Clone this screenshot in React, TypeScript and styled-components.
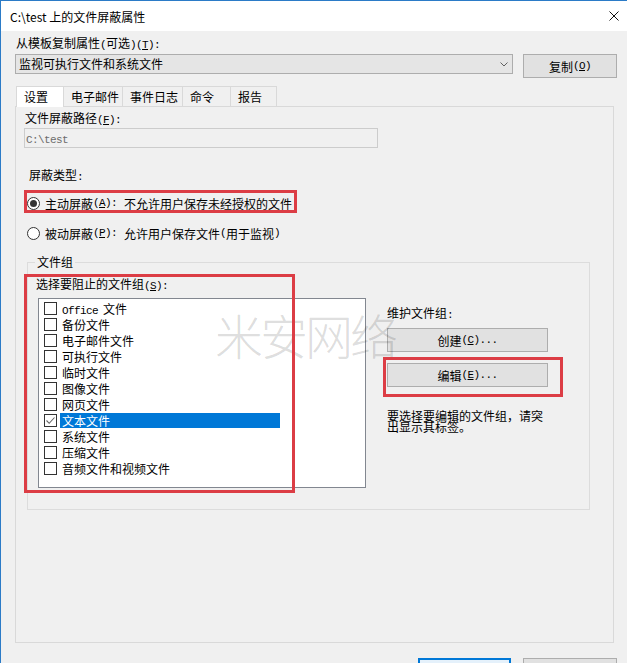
import React from "react";
import styled, { createGlobalStyle } from "styled-components";

const GlobalStyle = createGlobalStyle`
  html, body { margin: 0; padding: 0; background: #f0f0f0; overflow: hidden; }
  body { font-family: "Noto Sans CJK SC", "Noto Sans", sans-serif; font-size: 12px; color: #000; }
  * { box-sizing: border-box; }
`;

const Window = styled.div`
  position: relative;
  width: 627px;
  height: 663px;
  overflow: hidden;
  background: #f0f0f0;
  border-left: 1px solid #2b7bc7;
  border-top: 1px solid #2b7bc7;
  display: flex;
  flex-direction: column;
`;

const TitleBar = styled.div`
  height: 30px;
  flex: none;
  background: #fff;
  display: flex;
  align-items: center;
  justify-content: space-between;
  padding: 0 8px 0 9px;
  font-size: 12px;
`;

const CloseIcon = () => (
  <svg width="10" height="10" viewBox="0 0 10 10">
    <path d="M0.5 0.5 L9.5 9.5 M9.5 0.5 L0.5 9.5" stroke="#111" strokeWidth="1" fill="none" />
  </svg>
);

const Body = styled.div`
  flex: 1;
  padding: 4px 10px 0 14px;
  display: flex;
  flex-direction: column;
`;

const Label = styled.div<{ $mt?: number; $ml?: number }>`
  line-height: 16px;
  height: 16px;
  white-space: nowrap;
  margin-top: ${(p) => p.$mt ?? 0}px;
  margin-left: ${(p) => p.$ml ?? 0}px;
`;

const Asc = styled.span<{ $gap?: number }>`
  font-family: "Liberation Mono", monospace;
  font-size: 11px;
  letter-spacing: -0.6px;
  margin-right: ${(p) => p.$gap ?? 0}px;
`;

const TemplateRow = styled.div`
  display: flex;
  align-items: flex-start;
  margin-top: 3px;
`;

const Combo = styled.div`
  width: 498px;
  height: 20px;
  background: #e5e5e5;
  border: 1px solid #adadad;
  display: flex;
  align-items: center;
  justify-content: space-between;
  padding: 0 4px 0 3px;
  line-height: 18px;
`;

const Chevron = () => (
  <svg width="8" height="5" viewBox="0 0 8 5">
    <path d="M0.5 0.5 L4 4 L7.5 0.5" stroke="#606060" strokeWidth="1" fill="none" />
  </svg>
);

const Button = styled.div<{ $w: number; $ml?: number; $mt?: number; $default?: boolean }>`
  width: ${(p) => p.$w}px;
  height: 24px;
  flex: none;
  margin-left: ${(p) => p.$ml ?? 0}px;
  margin-top: ${(p) => p.$mt ?? 0}px;
  background: ${(p) => (p.$default ? "#e5f1fb" : "#e1e1e1")};
  border: 1px solid ${(p) => (p.$default ? "#0078d7" : "#adadad")};
  box-shadow: ${(p) => (p.$default ? "inset 0 0 0 1px #0078d7" : "none")};
  display: flex;
  align-items: center;
  justify-content: center;
  white-space: nowrap;
`;

const TabStrip = styled.div`
  display: flex;
  align-items: flex-end;
  height: 20px;
  margin-top: 8px;
  margin-left: 1px;
  position: relative;
  z-index: 1;
`;

const Tab = styled.div<{ $w: number; $active?: boolean }>`
  width: ${(p) => p.$w}px;
  height: ${(p) => (p.$active ? 21 : 20)}px;
  margin-bottom: ${(p) => (p.$active ? -1 : 0)}px;
  padding: 1px 0 0 7px;
  line-height: 17px;
  background: ${(p) => (p.$active ? "#ffffff" : "#f0f0f0")};
  border: 1px solid #d9d9d9;
  border-bottom: none;
  margin-right: -1px;
  white-space: nowrap;
`;

const Panel = styled.div`
  width: 599px;
  height: 537px;
  flex: none;
  border: 1px solid #d9d9d9;
  padding: 3px 0 0 8px;
  display: flex;
  flex-direction: column;
`;

const PathInput = styled.div`
  width: 354px;
  height: 20px;
  margin-top: 2px;
  border: 1px solid #cccccc;
  background: #f0f0f0;
  color: #6d6d6d;
  padding-left: 1px;
  line-height: 18px;
`;

const RadioRow = styled.div<{ $mt: number }>`
  display: flex;
  align-items: center;
  height: 16px;
  margin-top: ${(p) => p.$mt}px;
  padding-left: 3px;
  white-space: nowrap;
`;

const RadioCircle = styled.span<{ $checked?: boolean }>`
  width: 13px;
  height: 13px;
  flex: none;
  margin-right: 5px;
  border: 1px solid #333;
  border-radius: 50%;
  background: #fff;
  display: flex;
  align-items: center;
  justify-content: center;
  &::after {
    content: "";
    width: 7px;
    height: 7px;
    border-radius: 50%;
    background: ${(p) => (p.$checked ? "#333" : "transparent")};
  }
`;

const GroupBox = styled.div`
  width: 563px;
  height: 248px;
  margin: 21px 0 0 3px;
  border: 1px solid #dcdcdc;
  display: flex;
  flex-direction: column;
`;

const GroupTitle = styled.div`
  align-self: flex-start;
  margin: -9px 0 0 7px;
  padding: 0 2px;
  background: #f0f0f0;
  line-height: 16px;
  height: 16px;
`;

const GroupContent = styled.div`
  display: flex;
  margin-top: 6px;
  padding-left: 8px;
`;

const Column = styled.div<{ $ml?: number }>`
  display: flex;
  flex-direction: column;
  margin-left: ${(p) => p.$ml ?? 0}px;
`;

const ListBox = styled.div`
  width: 328px;
  height: 190px;
  margin: 6px 0 0 2px;
  background: #fff;
  border: 1px solid #828790;
  padding: 1px 0 0 5px;
`;

const ListRow = styled.div`
  display: flex;
  align-items: center;
  height: 16px;
`;

const CheckBox = styled.span`
  width: 13px;
  height: 13px;
  flex: none;
  border: 1px solid #333;
  background: #fff;
  display: flex;
  align-items: center;
  justify-content: center;
`;

const ItemText = styled.span<{ $selected?: boolean }>`
  margin-left: 3px;
  padding-left: 2px;
  width: 220px;
  height: 15px;
  line-height: 15px;
  white-space: nowrap;
  background: ${(p) => (p.$selected ? "#0078d7" : "transparent")};
  color: ${(p) => (p.$selected ? "#fff" : "#000")};
`;

const Hint = styled.div`
  width: 161px;
  margin-top: 23px;
  line-height: 11px;
`;

const BottomBar = styled.div`
  display: flex;
  justify-content: flex-end;
  gap: 12px;
  margin-top: 15px;
`;

const Watermark = styled.div`
  position: absolute;
  left: 214px;
  top: 309px;
  font-size: 48px;
  line-height: 48px;
  letter-spacing: -3px;
  color: rgba(0, 0, 0, 0.14);
  font-weight: 300;
  white-space: nowrap;
  pointer-events: none;
`;

const Highlight = styled.div<{ $x: number; $y: number; $w: number; $h: number }>`
  position: absolute;
  left: ${(p) => p.$x}px;
  top: ${(p) => p.$y}px;
  width: ${(p) => p.$w}px;
  height: ${(p) => p.$h}px;
  border: 3px solid #dc3d45;
  pointer-events: none;
`;

const CheckMark = () => (
  <svg width="11" height="11" viewBox="0 0 11 11">
    <path d="M1.5 5.5 L4.2 8.3 L9.5 2.5" stroke="#666" strokeWidth="1.1" fill="none" />
  </svg>
);

const items: { label: React.ReactNode; checked?: boolean }[] = [
  { label: <><Asc $gap={5}>Office</Asc>文件</> },
  { label: "备份文件" },
  { label: "电子邮件文件" },
  { label: "可执行文件" },
  { label: "临时文件" },
  { label: "图像文件" },
  { label: "网页文件" },
  { label: "文本文件", checked: true },
  { label: "系统文件" },
  { label: "压缩文件" },
  { label: "音频文件和视频文件" },
];

const tabs = [
  { name: "设置", w: 48 },
  { name: "电子邮件", w: 60 },
  { name: "事件日志", w: 61 },
  { name: "命令", w: 49 },
  { name: "报告", w: 47 },
];

export default function App() {
  return (
    <>
      <GlobalStyle />
      <Window>
        <TitleBar>
          <span>C:\test 上的文件屏蔽属性</span>
          <CloseIcon />
        </TitleBar>
        <Body>
          <Label $ml={1}>
            从模板复制属性<Asc>(</Asc>可选<Asc>)(<u>T</u>):</Asc>
          </Label>
          <TemplateRow>
            <Combo>
              <span>监视可执行文件和系统文件</span>
              <Chevron />
            </Combo>
            <Button $w={94} $ml={10}>
              复制<Asc>(<u>O</u>)</Asc>
            </Button>
          </TemplateRow>
          <TabStrip>
            {tabs.map((t, i) => (
              <Tab key={t.name} $w={t.w} $active={i === 0}>
                {t.name}
              </Tab>
            ))}
          </TabStrip>
          <Panel>
            <Label $ml={1}>
              文件屏蔽路径<Asc>(<u>F</u>):</Asc>
            </Label>
            <PathInput>
              <Asc>C:\test</Asc>
            </PathInput>
            <Label $mt={19} $ml={5}>
              屏蔽类型<Asc>:</Asc>
            </Label>
            <RadioRow $mt={12}>
              <RadioCircle $checked />
              主动屏蔽<Asc $gap={7}>(<u>A</u>):</Asc>不允许用户保存未经授权的文件
            </RadioRow>
            <RadioRow $mt={14}>
              <RadioCircle />
              被动屏蔽<Asc $gap={7}>(<u>P</u>):</Asc>允许用户保存文件<Asc>(</Asc>用于监视<Asc>)</Asc>
            </RadioRow>
            <GroupBox>
              <GroupTitle>文件组</GroupTitle>
              <GroupContent>
                <Column>
                  <Label>
                    选择要阻止的文件组<Asc>(<u>S</u>):</Asc>
                  </Label>
                  <ListBox>
                    {items.map((it, i) => (
                      <ListRow key={i}>
                        <CheckBox>{it.checked && <CheckMark />}</CheckBox>
                        <ItemText $selected={it.checked}>{it.label}</ItemText>
                      </ListRow>
                    ))}
                  </ListBox>
                </Column>
                <Column $ml={21}>
                  <Label $mt={29}>
                    维护文件组<Asc>:</Asc>
                  </Label>
                  <Button $w={161} $mt={7}>
                    创建<Asc>(<u>C</u>)...</Asc>
                  </Button>
                  <Button $w={161} $mt={11}>
                    编辑<Asc>(<u>E</u>)...</Asc>
                  </Button>
                  <Hint>要选择要编辑的文件组，请突出显示其标签。</Hint>
                </Column>
              </GroupContent>
            </GroupBox>
          </Panel>
          <BottomBar>
            <Button $w={93} $default>
              确定
            </Button>
            <Button $w={94}>取消</Button>
          </BottomBar>
        </Body>
        <Watermark>米安网络</Watermark>
        <Highlight $x={23} $y={189} $w={273} $h={23} />
        <Highlight $x={23} $y={273} $w={271} $h={219} />
        <Highlight $x={382} $y={356} $w={180} $h={40} />
      </Window>
    </>
  );
}
